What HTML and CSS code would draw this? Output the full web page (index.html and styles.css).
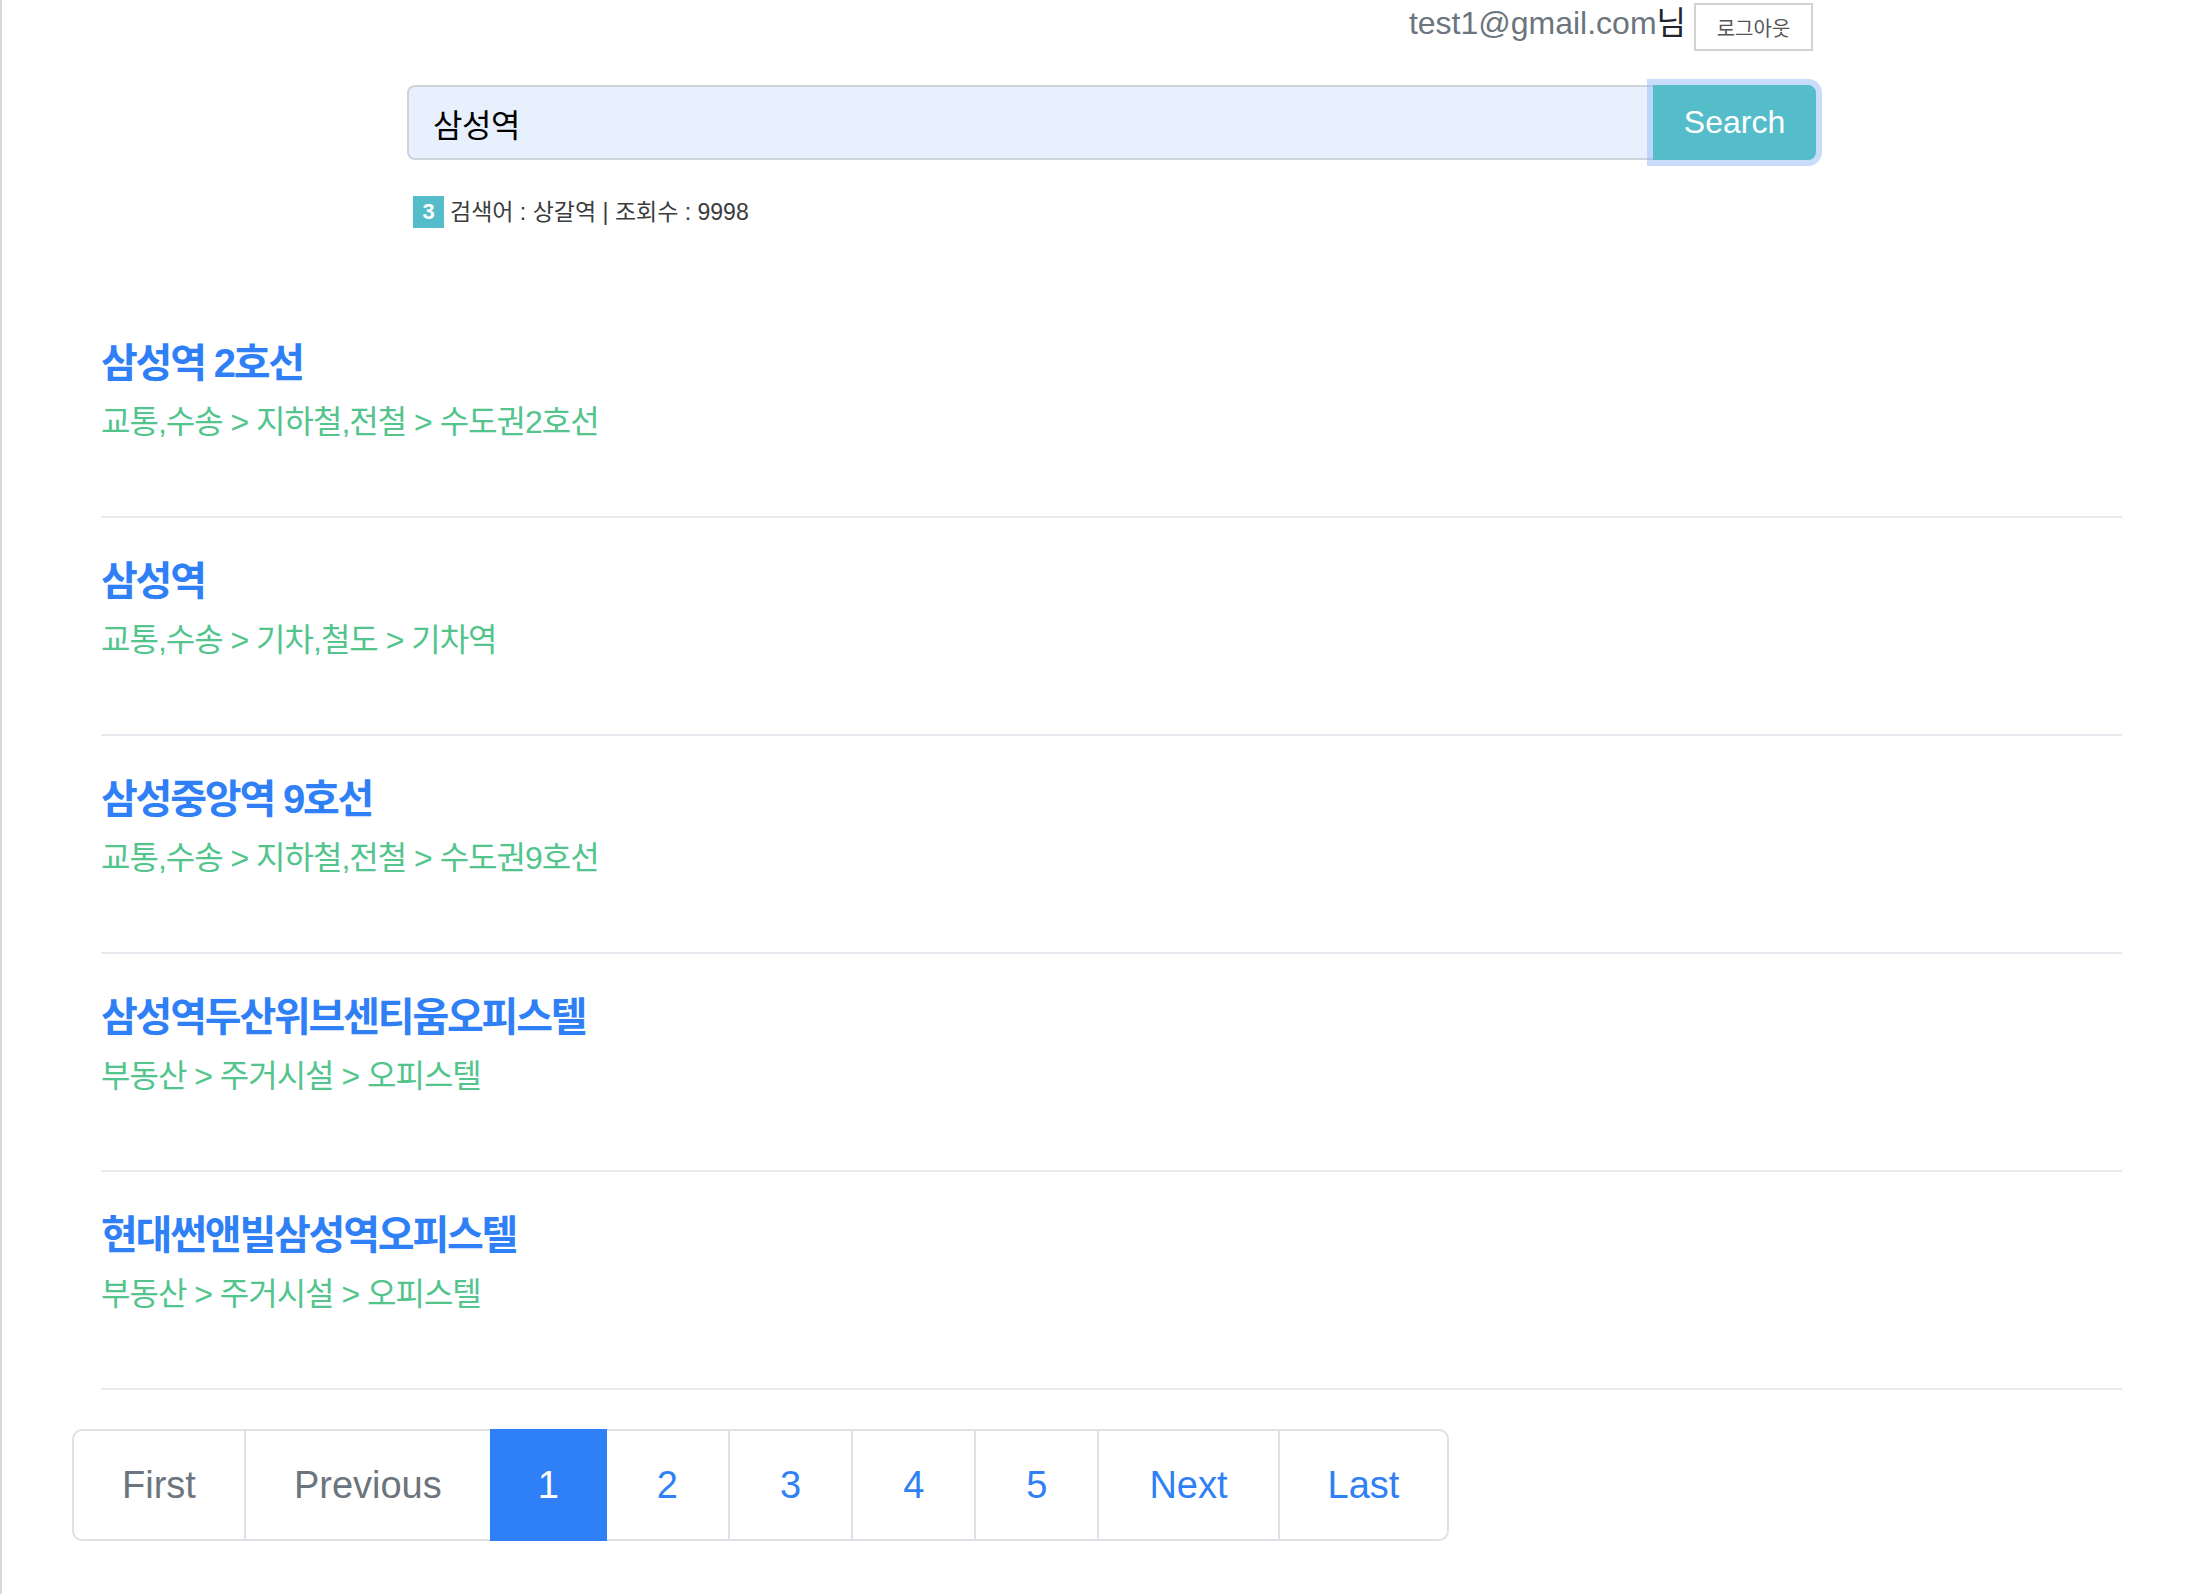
FILE: index.html
```html
<!DOCTYPE html>
<html lang="ko">
<head>
<meta charset="utf-8">
<title>검색</title>
<link rel="stylesheet" href="styles.css">
</head>
<body>
<div class="page">
  <div class="top">
    <header class="user-bar">
      <span class="user"><span class="email">test1@gmail.com</span><span class="nim">님</span></span>
      <button class="logout" type="button">로그아웃</button>
    </header>
    <form class="search">
      <input class="search-input" type="text" value="삼성역">
      <button class="search-btn" type="button">Search</button>
    </form>
    <div class="info">
      <span class="badge">3</span>
      <span class="info-text">검색어 : 상갈역 | 조회수 : 9998</span>
    </div>
  </div>

  <ul class="results">
    <li class="result">
      <a class="result-title" href="#">삼성역 2호선</a>
      <p class="result-cat">교통,수송 &gt; 지하철,전철 &gt; 수도권2호선</p>
    </li>
    <li class="result">
      <a class="result-title" href="#">삼성역</a>
      <p class="result-cat">교통,수송 &gt; 기차,철도 &gt; 기차역</p>
    </li>
    <li class="result">
      <a class="result-title" href="#">삼성중앙역 9호선</a>
      <p class="result-cat">교통,수송 &gt; 지하철,전철 &gt; 수도권9호선</p>
    </li>
    <li class="result">
      <a class="result-title" href="#">삼성역두산위브센티움오피스텔</a>
      <p class="result-cat">부동산 &gt; 주거시설 &gt; 오피스텔</p>
    </li>
    <li class="result">
      <a class="result-title" href="#">현대썬앤빌삼성역오피스텔</a>
      <p class="result-cat">부동산 &gt; 주거시설 &gt; 오피스텔</p>
    </li>
  </ul>

  <nav class="pager">
    <ul class="pagination">
      <li class="page-item disabled"><a class="page-link" href="#">First</a></li>
      <li class="page-item disabled"><a class="page-link" href="#">Previous</a></li>
      <li class="page-item active"><a class="page-link num" href="#">1</a></li>
      <li class="page-item"><a class="page-link num" href="#">2</a></li>
      <li class="page-item"><a class="page-link num" href="#">3</a></li>
      <li class="page-item"><a class="page-link num" href="#">4</a></li>
      <li class="page-item"><a class="page-link num" href="#">5</a></li>
      <li class="page-item"><a class="page-link wide" href="#">Next</a></li>
      <li class="page-item"><a class="page-link" href="#">Last</a></li>
    </ul>
  </nav>
</div>
</body>
</html>
```

FILE: styles.css
```css
* { box-sizing: border-box; }

html, body {
  margin: 0;
  padding: 0;
  background: #ffffff;
}

body {
  font-family: "Liberation Sans", "Noto Sans CJK KR", sans-serif;
  font-feature-settings: "palt" 1;
  color: #212529;
  border-left: 2px solid #dadada;
  min-height: 100vh;
}

.page {
  display: flex;
  flex-direction: column;
  align-items: flex-start;
}

/* ---------- top area ---------- */
.top {
  margin-left: 405px;
  width: 1409px;
  display: flex;
  flex-direction: column;
}

.user-bar {
  display: flex;
  justify-content: flex-end;
  align-items: flex-start;
  gap: 8px;
  padding-right: 3px;
  height: 51px;
}

.user {
  font-size: 32px;
  line-height: 46px;
  white-space: nowrap;
}

.email { color: #6c757d; }
.nim { color: #212529; }

.logout {
  margin-top: 3px;
  height: 48px;
  width: 119px;
  padding: 0;
  background: #ffffff;
  border: 2px solid #d3d3d3;
  border-radius: 0;
  font-family: "Liberation Sans", "Noto Sans CJK KR", sans-serif;
  font-feature-settings: "palt" 1;
  font-size: 20px;
  color: #555555;
}

.search {
  margin: 34px 0 0 0;
  display: flex;
  height: 75px;
}

.search-input {
  flex: 1 1 auto;
  height: 75px;
  margin: 0;
  padding: 0 24px;
  background: #e8f0fe;
  border: 2px solid #ced4da;
  border-right: none;
  border-radius: 8px 0 0 8px;
  font-family: "Liberation Sans", "Noto Sans CJK KR", sans-serif;
  font-feature-settings: "palt" 1;
  font-size: 32px;
  letter-spacing: -0.5px;
  color: #000000;
  outline: none;
}

.search-btn {
  position: relative;
  z-index: 1;
  width: 163px;
  height: 75px;
  margin: 0;
  padding: 0;
  background: #55bdca;
  border: 2px solid #55bdca;
  border-radius: 0 8px 8px 0;
  box-shadow: 0 0 0 6px rgba(135, 180, 245, 0.45);
  font-family: "Liberation Sans", sans-serif;
  font-size: 32px;
  color: #ffffff;
}

.info {
  margin-top: 36px;
  margin-left: 6px;
  display: flex;
  align-items: center;
  gap: 6px;
  height: 32px;
}

.badge {
  display: flex;
  align-items: center;
  justify-content: center;
  width: 31px;
  height: 32px;
  background: #55bdca;
  color: #ffffff;
  font-weight: 700;
  font-size: 22px;
}

.info-text {
  font-size: 23px;
  line-height: 32px;
  color: #3c3c3c;
}

/* ---------- results ---------- */
.results {
  list-style: none;
  margin: 72px 0 0 99px;
  padding: 0;
  width: 2021px;
}

.result {
  border-bottom: 2px solid #e6e9ed;
  padding: 40px 0 70px;
}

.result-title {
  display: block;
  font-size: 40px;
  line-height: 46px;
  font-weight: 700;
  letter-spacing: -2.2px;
  color: #2f7ff6;
  text-decoration: none;
  margin-bottom: 12px;
}

.result-cat {
  margin: 0;
  font-size: 32px;
  line-height: 48px;
  letter-spacing: -1px;
  color: #52c48c;
}

/* ---------- pagination ---------- */
.pager {
  margin: 39px 0 0 70px;
}

.pagination {
  list-style: none;
  margin: 0;
  padding: 0;
  display: flex;
}

.page-item + .page-item { margin-left: -2px; }

.page-link {
  display: block;
  padding: 26px 48px;
  font-size: 38px;
  line-height: 56px;
  color: #2f7ff6;
  text-decoration: none;
  background: #ffffff;
  border: 2px solid #dee2e6;
}

.page-link.num { padding-left: 50px; padding-right: 50px; }
.page-link.wide { padding-left: 50px; padding-right: 50px; }

.page-item:first-child .page-link { border-radius: 10px 0 0 10px; }
.page-item:last-child .page-link { border-radius: 0 10px 10px 0; }

.page-item.disabled .page-link { color: #6c757d; }

.page-item.active .page-link {
  position: relative;
  z-index: 1;
  padding-left: 46px;
  padding-right: 46px;
  background: #2f7ff6;
  border-color: #2f7ff6;
  color: #ffffff;
}
```
